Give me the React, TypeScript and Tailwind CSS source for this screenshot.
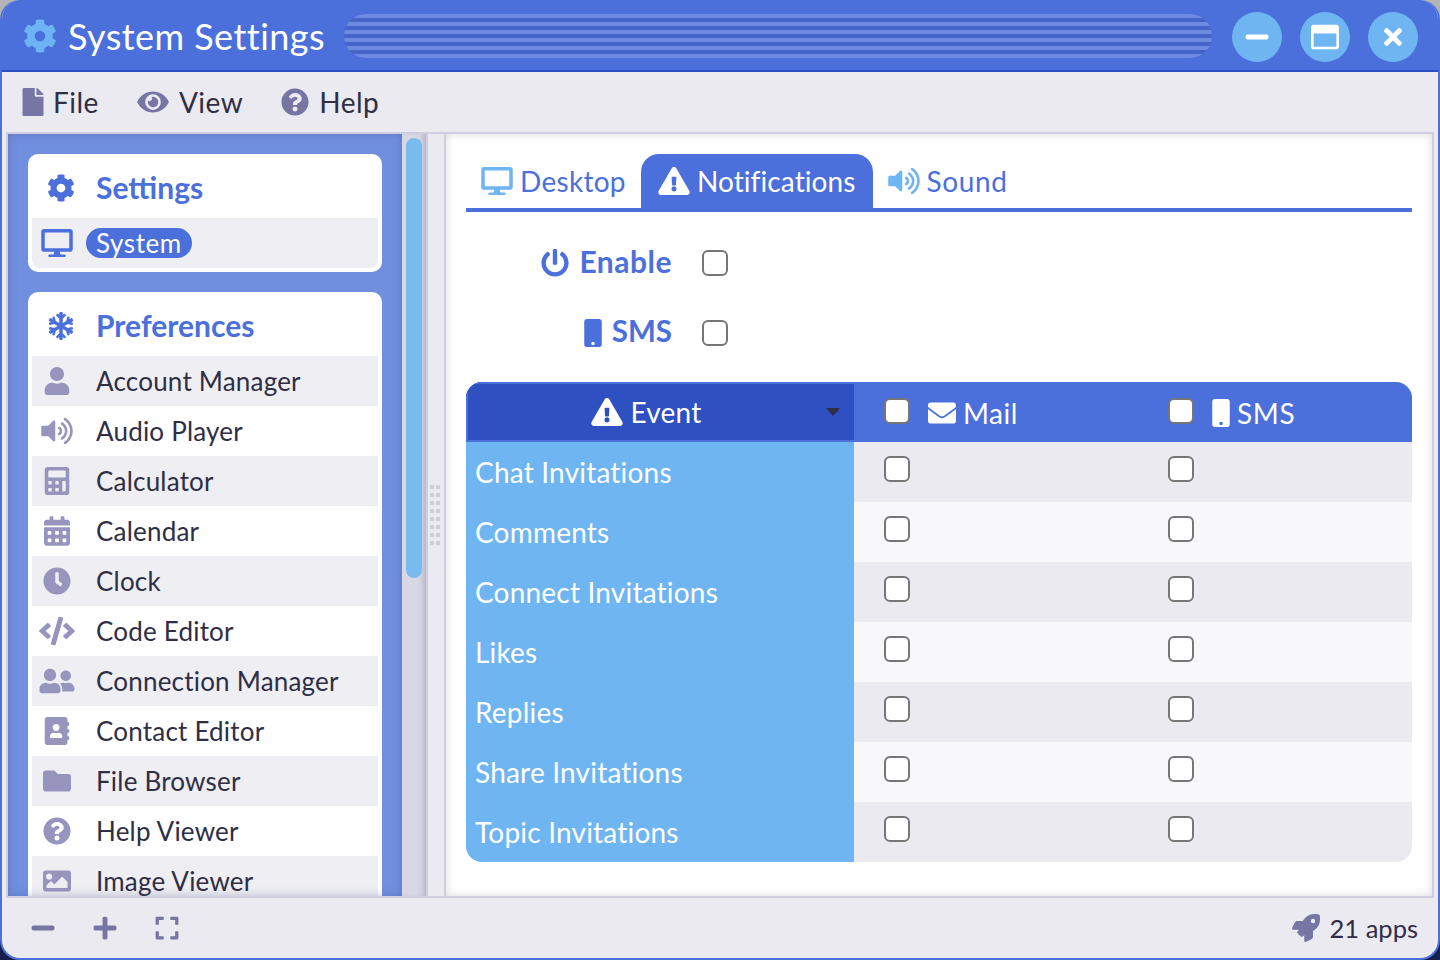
import React from 'react';
import { IconType } from 'react-icons';
import {
  FaAddressBook, FaCalculator, FaCalendarAlt, FaClock, FaCode, FaCog, FaDesktop, FaEnvelope,
  FaExclamationTriangle, FaExpand, FaEye, FaFile, FaFolder, FaImage, FaMinus, FaMobile, FaPlus,
  FaPowerOff, FaQuestionCircle, FaRegWindowMaximize, FaRocket, FaSnowflake, FaTimes, FaUser, FaUserFriends, FaVolumeUp,
} from 'react-icons/fa';

const apps: { name: string; icon: IconType; size: string }[] = [
  { name: 'Account Manager', icon: FaUser, size: 'w-[26px] h-[28px]' },
  { name: 'Audio Player', icon: FaVolumeUp, size: 'w-[32px] h-[28px]' },
  { name: 'Calculator', icon: FaCalculator, size: 'w-[26px] h-[28px]' },
  { name: 'Calendar', icon: FaCalendarAlt, size: 'w-[26px] h-[30px]' },
  { name: 'Clock', icon: FaClock, size: 'w-[28px] h-[28px]' },
  { name: 'Code Editor', icon: FaCode, size: 'w-[36px] h-[30px]' },
  { name: 'Connection Manager', icon: FaUserFriends, size: 'w-[36px] h-[28px]' },
  { name: 'Contact Editor', icon: FaAddressBook, size: 'w-[26px] h-[28px]' },
  { name: 'File Browser', icon: FaFolder, size: 'w-[28px] h-[28px]' },
  { name: 'Help Viewer', icon: FaQuestionCircle, size: 'w-[28px] h-[28px]' },
  { name: 'Image Viewer', icon: FaImage, size: 'w-[28px] h-[28px]' },
];

const events = ['Chat Invitations', 'Comments', 'Connect Invitations', 'Likes', 'Replies', 'Share Invitations', 'Topic Invitations'];

function Checkbox() {
  return <span className="block w-[26px] h-[26px] shrink-0 bg-white border-2 border-[#767676] rounded-[6px]" />;
}

function WindowButton({ children }: { children: React.ReactNode }) {
  return <button className="w-[50px] h-[50px] rounded-full bg-[#6fb5f2] text-white flex items-center justify-center">{children}</button>;
}

export default function App() {
  return (
    <div className="w-[1440px] h-[960px] bg-gradient-to-b from-[#b5b5b5] to-[#16204f] overflow-hidden font-['Lato',sans-serif] text-[#2f2e45]">
      <div className="w-full h-full flex flex-col rounded-[20px] overflow-hidden border-x-2 border-b-2 border-[#4b6fdb] bg-[#ebeaf0]">
        {/* Title bar */}
        <div className="h-[72px] shrink-0 -mx-[2px] bg-[#4b6fdb] border-b-[2px] border-[#2f50c0] flex items-center pl-[23px] pr-[22px] pt-[4px]">
          <FaCog className="w-[34px] h-[36px] -mt-[2px] text-[#6db4f4] shrink-0" />
          <span className="ml-[11px] -mt-[2px] text-[36px] tracking-[0.45px] leading-none text-white w-[276px] whitespace-nowrap">System Settings</span>
          <div className="w-[868px] h-[44px] -mt-[2px] rounded-full bg-[repeating-linear-gradient(to_bottom,#6e8be2_0px,#6e8be2_4px,#4565c8_4px,#4565c8_8px)]" />
          <div className="ml-auto flex gap-[18px]">
            <WindowButton><FaMinus className="w-[26px] h-[26px]" /></WindowButton>
            <WindowButton><FaRegWindowMaximize className="w-[28px] h-[28px]" /></WindowButton>
            <WindowButton><FaTimes className="w-[24px] h-[26px]" /></WindowButton>
          </div>
        </div>

        {/* Menu bar */}
        <div className="h-[60px] shrink-0 flex items-center pl-[20px] text-[28px] tracking-[0.5px] text-[#2f2e45]">
          <div className="flex items-center gap-[9px] mr-[38px]">
            <FaFile className="w-[22px] h-[28px] text-[#7675a3]" />
            <span>File</span>
          </div>
          <div className="flex items-center gap-[10px] mr-[38px]">
            <FaEye className="w-[32px] h-[28px] text-[#7675a3]" />
            <span>View</span>
          </div>
          <div className="flex items-center gap-[10px]">
            <FaQuestionCircle className="w-[28px] h-[28px] text-[#7675a3]" />
            <span>Help</span>
          </div>
        </div>

        {/* Main panel */}
        <div className="flex-1 min-h-0 mx-[4px] flex border-2 border-[#cfcde0]">
          {/* Sidebar */}
          <div className="relative w-[394px] shrink-0 bg-[#718fdf] overflow-hidden px-[20px] pt-[20px] flex flex-col gap-[20px]">
            <div className="shrink-0 bg-white rounded-[10px] p-[4px]">
              <div className="h-[60px] flex items-center text-[#4b6fdb]">
                <span className="w-[64px] flex justify-center pr-[6px]"><FaCog className="w-[28px] h-[28px]" /></span>
                <span className="-mt-[2px] text-[30px] font-bold">Settings</span>
              </div>
              <div className="h-[50px] bg-[#eeeef3] rounded-b-[8px] flex items-center">
                <span className="w-[50px] flex justify-center"><FaDesktop className="w-[32px] h-[28px] text-[#4b6fdb]" /></span>
                <span className="ml-[4px] h-[30px] px-[10px] rounded-full bg-[#4b6fdb] text-white text-[26px] tracking-[0.6px] leading-[30px]">System</span>
              </div>
            </div>
            <div className="shrink-0 bg-white rounded-[10px] p-[4px]">
              <div className="h-[60px] flex items-center text-[#4b6fdb]">
                <span className="w-[64px] flex justify-center pr-[6px]"><FaSnowflake className="w-[28px] h-[28px]" /></span>
                <span className="-mt-[2px] text-[30px] font-bold">Preferences</span>
              </div>
              {apps.map((app, i) => (
                <div key={app.name} className={i % 2 === 0 ? 'h-[50px] bg-[#eeeef3] flex items-center' : 'h-[50px] bg-white flex items-center'}>
                  <span className="w-[50px] flex justify-center"><app.icon className={`${app.size} text-[#9795bd]`} /></span>
                  <span className="ml-[14px] text-[26px] tracking-[0.2px] whitespace-nowrap">{app.name}</span>
                </div>
              ))}
            </div>
            {/* inner shadow over the scrolled content */}
            <div className="absolute inset-0 pointer-events-none shadow-[inset_0_0_10px_rgba(40,50,110,0.28)]" />
          </div>

          {/* Scrollbar */}
          <div className="w-[24px] shrink-0 bg-[#d8d7e4] pt-[4px] pl-[4px] shadow-[inset_-6px_0_6px_-4px_rgba(80,80,120,0.3)]">
            <div className="w-[16px] h-[440px] rounded-full bg-[#78bbef]" />
          </div>

          {/* Splitter */}
          <div className="w-[20px] shrink-0 bg-[#ebeaf0] border-x-2 border-[#cfcde0] flex items-center justify-center">
            <div className="grid grid-cols-2 gap-x-[2px] gap-y-[4px] pr-[2px]">
              {Array.from({ length: 16 }).map((_, i) => (
                <span key={i} className="block w-[4px] h-[4px] bg-[#cfcfd6]" />
              ))}
            </div>
          </div>

          {/* Content */}
          <div className="flex-1 min-w-0 bg-white shadow-[inset_0_0_10px_rgba(60,60,80,0.18)] px-[20px] pt-[20px]">
            {/* Tabs */}
            <div className="h-[58px] border-b-4 border-[#4b6fdb] flex text-[28px] tracking-[0.2px] text-[#4b6fdb]">
              <div className="flex items-center gap-[7px] pl-[15px] pr-[15px] tracking-[0.3px]">
                <FaDesktop className="w-[32px] h-[28px] text-[#6fb5f2]" />
                <span>Desktop</span>
              </div>
              <div className="h-[54px] flex items-center gap-[7px] px-[17px] rounded-t-[18px] bg-[#4b6fdb] text-white tracking-[0.1px]">
                <FaExclamationTriangle className="w-[32px] h-[28px]" />
                <span>Notifications</span>
              </div>
              <div className="flex items-center gap-[7px] pl-[15px] tracking-[0.6px]">
                <FaVolumeUp className="w-[32px] h-[28px] text-[#6fb5f2]" />
                <span>Sound</span>
              </div>
            </div>

            {/* Form */}
            <div className="pt-[38px] pb-[15px] flex flex-col gap-[44px] pl-[75px]">
              <div className="h-[26px] flex items-center">
                <div className="w-[131px] flex items-center justify-end gap-[10px] text-[#4b6fdb] text-[30px] tracking-[0.5px] font-bold whitespace-nowrap">
                  <FaPowerOff className="w-[28px] h-[30px] shrink-0 -mt-[1px]" />
                  <span className="-mt-[3px]">Enable</span>
                </div>
                <span className="ml-[30px]"><Checkbox /></span>
              </div>
              <div className="h-[26px] flex items-center">
                <div className="w-[131px] flex items-center justify-end gap-[9px] text-[#4b6fdb] text-[29.5px] font-bold whitespace-nowrap">
                  <FaMobile className="w-[20px] h-[28px] shrink-0 -mt-[1px]" />
                  <span className="-mt-[3px]">SMS</span>
                </div>
                <span className="ml-[30px]"><Checkbox /></span>
              </div>
            </div>

            {/* Table */}
            <div className="mt-[21px] rounded-[16px] overflow-hidden">
              <div className="h-[60px] bg-[#4b6fdb] flex text-white text-[28px] tracking-[0.2px]">
                <div className="w-[388px] shrink-0 border-2 border-r-0 border-[#4b6fdb] bg-[#2f50c0] relative flex items-center justify-center gap-[8px] pr-[30px]">
                  <FaExclamationTriangle className="w-[32px] h-[28px]" />
                  <span>Event</span>
                  <span className="absolute right-[14px] top-[24px] w-0 h-0 border-x-[7px] border-x-transparent border-t-[8px] border-t-[#2f2e45]" />
                </div>
                <div className="w-[284px] shrink-0 flex items-center pl-[30px]">
                  <span className="-mt-[3px]"><Checkbox /></span>
                  <FaEnvelope className="ml-[18px] w-[28px] h-[28px] mt-[1px]" />
                  <span className="ml-[7px] mt-[2px] tracking-[0.5px]">Mail</span>
                </div>
                <div className="flex-1 flex items-center pl-[30px]">
                  <span className="-mt-[3px]"><Checkbox /></span>
                  <FaMobile className="ml-[17px] w-[20px] h-[28px] mt-[1px]" />
                  <span className="ml-[6px] mt-[2px] tracking-[0.6px]">SMS</span>
                </div>
              </div>
              {events.map((name, i) => (
                <div key={name} className={i % 2 === 0 ? 'h-[60px] flex bg-[#ebeaf0]' : 'h-[60px] flex bg-[#f8f8fb]'}>
                  <div className="w-[388px] shrink-0 bg-[#6fb5f2] text-white text-[28px] tracking-[0.2px] pl-[9px] flex items-center">{name}</div>
                  <div className="w-[284px] shrink-0 pl-[30px] pt-[14px]"><Checkbox /></div>
                  <div className="flex-1 pl-[30px] pt-[14px]"><Checkbox /></div>
                </div>
              ))}
            </div>
          </div>
        </div>

        {/* Status bar */}
        <div className="h-[60px] shrink-0 flex items-center pl-[28px] pr-[20px] text-[#7675a3]">
          <FaMinus className="w-[26px] h-[26px]" />
          <FaPlus className="ml-[36px] w-[26px] h-[26px]" />
          <FaExpand className="ml-[36px] w-[26px] h-[26px]" />
          <div className="ml-auto flex items-center gap-[10px]">
            <FaRocket className="w-[28px] h-[28px]" />
            <span className="text-[25.5px] text-[#2f2e45]">21 apps</span>
          </div>
        </div>
      </div>
    </div>
  );
}
